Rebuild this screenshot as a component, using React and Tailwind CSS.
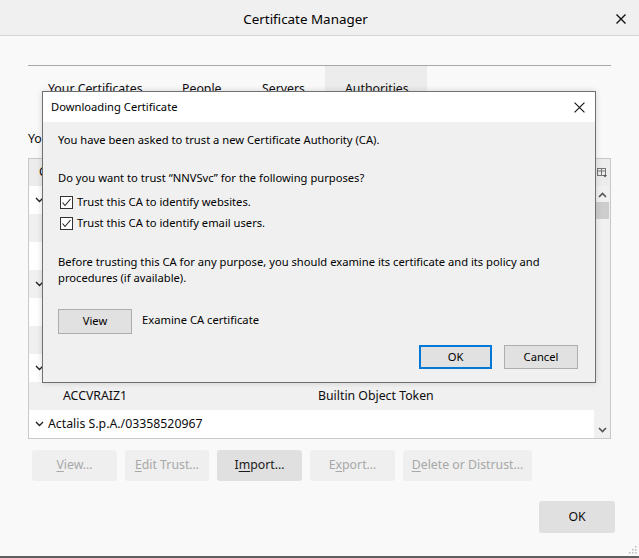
import { useState } from 'react'

const FONT = { fontFamily: '"Noto Sans", "Open Sans", sans-serif' }

const ROWS = [
  { group: true, name: 'AC Camerfirma S.A.', device: '' },
  { name: 'Chambers of Commerce Root - 2008', device: 'Builtin Object Token' },
  { name: 'Global Chambersign Root - 2008', device: 'Builtin Object Token' },
  { group: true, name: 'AC Camerfirma SA CIF A82743287', device: '' },
  { name: 'Camerfirma Chambers of Commerce Root', device: 'Builtin Object Token' },
  { name: 'Camerfirma Global Chambersign Root', device: 'Builtin Object Token' },
  { group: true, name: 'ACCV', device: '' },
  { name: 'ACCVRAIZ1', device: 'Builtin Object Token' },
  { group: true, name: 'Actalis S.p.A./03358520967', device: '' },
]

function Chevron({ className = '' }) {
  return (
    <svg width="9" height="6" viewBox="0 0 9 6" className={className}>
      <polyline points="1,1 4.5,4.5 8,1" fill="none" stroke="#222" strokeWidth="1.4" />
    </svg>
  )
}

function CloseX({ size = 10, stroke = '#111', width = 1.2 }) {
  return (
    <svg width={size} height={size} viewBox="0 0 10 10">
      <path d="M0.5 0.5 L9.5 9.5 M9.5 0.5 L0.5 9.5" stroke={stroke} strokeWidth={width} fill="none" />
    </svg>
  )
}

function CheckBox({ checked, onChange }) {
  return (
    <button
      onClick={onChange}
      className="w-[13px] h-[13px] border border-[#333] bg-white flex items-center justify-center shrink-0"
    >
      {checked && (
        <svg width="11" height="11" viewBox="0 0 11 11">
          <polyline points="1.5,5.5 4,8.5 9.5,2" fill="none" stroke="#222" strokeWidth="1.1" />
        </svg>
      )}
    </button>
  )
}

function ActionButton({ label, accel, disabled, width }) {
  const i = label.indexOf(accel)
  return (
    <button
      className={`h-[31px] rounded-[3px] text-[12.3px] ${width} ${
        disabled ? 'bg-[#efefef] text-[#a8a8a8]' : 'bg-[#e0e0e0] text-[#1a1a1a]'
      }`}
    >
      {label.slice(0, i)}
      <span className="underline underline-offset-2">{accel}</span>
      {label.slice(i + 1)}
    </button>
  )
}

function DownloadDialog() {
  const [web, setWeb] = useState(true)
  const [mail, setMail] = useState(true)
  return (
    <div
      className="absolute left-[42px] top-[91px] w-[554px] h-[292px] border border-[#707070] flex flex-col text-[11.2px] text-black shadow-[0_0_6px_rgba(0,0,0,0.15)]"
      style={FONT}
    >
      <div className="h-[30px] bg-white flex items-center justify-between pl-[8px] pr-[10px] shrink-0">
        <span>Downloading Certificate</span>
        <CloseX size={11} width={1} />
      </div>
      <div className="flex-1 bg-[#f0f0f0] px-[15px] pt-[10px] flex flex-col">
        <div className="leading-[16px]">You have been asked to trust a new Certificate Authority (CA).</div>
        <div className="leading-[16px] mt-[22px]">
          Do you want to trust “NNVSvc” for the following purposes?
        </div>
        <label className="flex items-center gap-[4px] mt-[8px] ml-[2px] h-[16px]">
          <CheckBox checked={web} onChange={() => setWeb(!web)} />
          <span>Trust this CA to identify websites.</span>
        </label>
        <label className="flex items-center gap-[4px] mt-[5px] ml-[2px] h-[16px]">
          <CheckBox checked={mail} onChange={() => setMail(!mail)} />
          <span>Trust this CA to identify email users.</span>
        </label>
        <div className="leading-[16px] mt-[23px]">
          Before trusting this CA for any purpose, you should examine its certificate and its policy and
          <br />
          procedures (if available).
        </div>
        <div className="flex items-center mt-[23px]">
          <button className="w-[74px] h-[25px] bg-[#e1e1e1] border border-[#adadad]">View</button>
          <span className="ml-[10px] -mt-[2px]">Examine CA certificate</span>
        </div>
        <div className="flex justify-end gap-[12px] mt-[11px] pr-[2px]">
          <button className="w-[73px] h-[24px] bg-[#e1e1e1] border-2 border-[#0078d7]">OK</button>
          <button className="w-[74px] h-[24px] bg-[#e1e1e1] border border-[#adadad]">Cancel</button>
        </div>
      </div>
    </div>
  )
}

export default function App() {
  return (
    <div
      className="relative w-[639px] h-[558px] bg-[#f9f9f9] overflow-hidden flex flex-col border-b-2 border-[#5f5f5f] text-[#0c0c0d]"
      style={FONT}
    >
      {/* Title bar */}
      <div className="h-[36px] shrink-0 bg-[#f0f0f0] border-b border-[#d6d6d6] flex items-center relative">
        <div className="flex-1 text-center text-[13.4px] pr-[28px] pt-[3px] text-black">Certificate Manager</div>
        <div className="absolute right-[13px] top-[14px]">
          <CloseX size={10} width={1.4} />
        </div>
      </div>

      {/* Tabs */}
      <div className="mx-[28px] mt-[29px] border-t border-[#a8a8a8] flex h-[40px] text-[12.3px]">
        <div className="w-[134px] pl-[20px] pt-[14px]">Your Certificates</div>
        <div className="w-[80px] pl-[20px] pt-[14px]">People</div>
        <div className="w-[83px] pl-[20px] pt-[14px]">Servers</div>
        <div className="w-[102px] pl-[20px] pt-[14px] bg-[#ececec]">Authorities</div>
      </div>

      {/* Panel */}
      <div className="px-[28px] text-[12.3px]">
        <div className="mt-[25px] h-[18px]">
          You have certificates on file that identify these certificate authorities
        </div>
        <div className="mt-[10px] h-[281px] border border-[#c8c8c8] bg-white flex flex-col">
          <div className="h-[27px] bg-[#ececec] flex items-center shrink-0">
            <div className="w-[289px] pl-[10px]">Certificate Name</div>
            <div className="flex-1">Security Device</div>
            <div className="w-[16px] flex justify-center">
              <svg width="11" height="10" viewBox="0 0 11 10">
                <rect x="0.5" y="0.5" width="8" height="7" fill="none" stroke="#777" />
                <line x1="0.5" y1="3" x2="8.5" y2="3" stroke="#777" />
                <line x1="4.5" y1="0.5" x2="4.5" y2="7.5" stroke="#777" />
                <polygon points="6,7 10,7 8,9.5" fill="#555" />
              </svg>
            </div>
          </div>
          <div className="flex flex-1">
            <div className="flex-1 flex flex-col">
              {ROWS.map((r, i) => (
                <div
                  key={i}
                  className={`h-[28px] flex items-center shrink-0 ${i % 2 ? 'bg-[#f0f0f0]' : 'bg-white'}`}
                >
                  <div className="w-[289px] flex items-center">
                    {r.group ? (
                      <>
                        <Chevron className="ml-[6px] mr-[4px]" />
                        <span>{r.name}</span>
                      </>
                    ) : (
                      <span className="pl-[34px]">{r.name}</span>
                    )}
                  </div>
                  <div className="flex-1">{r.device}</div>
                </div>
              ))}
            </div>
            <div className="w-[16px] bg-[#f0f0f0] flex flex-col items-center">
              <svg width="9" height="6" viewBox="0 0 9 6" className="mt-[6px]">
                <polyline points="1,5 4.5,1.5 8,5" fill="none" stroke="#555" strokeWidth="1.6" />
              </svg>
              <div className="mt-[4px] w-[13px] h-[17px] bg-[#cdcdcd]" />
              <div className="flex-1" />
              <svg width="9" height="6" viewBox="0 0 9 6" className="mb-[5px]">
                <polyline points="1,1 4.5,4.5 8,1" fill="none" stroke="#555" strokeWidth="1.6" />
              </svg>
            </div>
          </div>
        </div>
        <div className="flex gap-[8px] mt-[11px] pl-[4px]">
          <ActionButton label="View…" accel="V" disabled width="w-[85px]" />
          <ActionButton label="Edit Trust…" accel="E" disabled width="w-[84px]" />
          <ActionButton label="Import…" accel="m" width="w-[85px]" />
          <ActionButton label="Export…" accel="x" disabled width="w-[85px]" />
          <ActionButton label="Delete or Distrust…" accel="D" disabled width="w-[129px]" />
        </div>
      </div>

      <div className="flex justify-end pr-[24px] mt-[20px]">
        <button className="w-[76px] h-[32px] rounded-[3px] bg-[#e0e0e0] text-[12.3px]">OK</button>
      </div>

      <div className="absolute right-[2px] bottom-[2px]">
        <svg width="8" height="8" viewBox="0 0 8 8">
          <rect x="6" y="0" width="1.5" height="1.5" fill="#bbb" />
          <rect x="3" y="3" width="1.5" height="1.5" fill="#bbb" />
          <rect x="6" y="3" width="1.5" height="1.5" fill="#bbb" />
          <rect x="0" y="6" width="1.5" height="1.5" fill="#bbb" />
          <rect x="3" y="6" width="1.5" height="1.5" fill="#bbb" />
          <rect x="6" y="6" width="1.5" height="1.5" fill="#bbb" />
        </svg>
      </div>

      <DownloadDialog />
    </div>
  )
}
